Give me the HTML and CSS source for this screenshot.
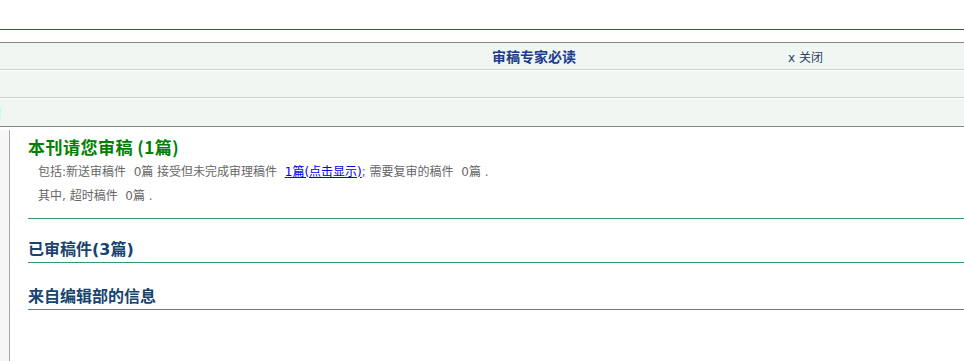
FILE: index.html
```html
<!DOCTYPE html>
<html lang="zh-CN">

<head>
    <meta charset="UTF-8">
    <title>审稿中心</title>
    <link rel="stylesheet" href="styles.css">
</head>

<body>
    <div class="top"></div>
    <div class="darkline"></div>

    <div class="bands">
        <div class="band notice">
            <span class="notice-title">审稿专家必读</span>
            <a class="close" href="#">x 关闭</a>
        </div>
        <div class="band"></div>
        <div class="band last"><span class="stub"></span></div>
    </div>

    <div class="main">
        <div class="side"></div>
        <div class="content">
            <div class="section first">
                <div class="head green">本刊请您审稿 (1篇)</div>
                <div class="info">包括:新送审稿件&nbsp;&nbsp;0篇 接受但未完成审理稿件&nbsp;&nbsp;<a href="#">1篇(点击显示)</a>; 需要复审的稿件&nbsp;&nbsp;0篇 .</div>
                <div class="info">其中, 超时稿件&nbsp;&nbsp;0篇 .</div>
            </div>
            <div class="section">
                <div class="head">已审稿件(3篇)</div>
            </div>
            <div class="section msg">
                <div class="head">来自编辑部的信息</div>
            </div>
        </div>
    </div>
</body>

</html>
```

FILE: styles.css
```css
body {
    margin: 0;
    font-family: "DejaVu Sans", "Noto Sans CJK SC", sans-serif;
    font-size: 12px;
    color: #666;
    background: #fff;
}

.top {
    height: 29px;
}

.darkline {
    height: 1px;
    background-color: #3d5d3a;
}

.bands {
    margin-top: 12px;
    border-top: 1px solid #858585;
}

.band {
    height: 26px;
    background-color: #f0f6f2;
    border-bottom: 1px solid #cfcfcf;
    margin-bottom: 1px;
    display: flex;
    align-items: center;
}

.band.last {
    height: 27px;
    margin-bottom: 0;
    border-bottom: 1px solid #858585;
}

.stub {
    width: 1px;
    height: 12px;
    background-color: #c4fbee;
}

.notice {
    padding-left: 492px;
    gap: 212px;
}

.notice-title {
    font-family: "Noto Sans CJK SC", sans-serif;
    font-size: 14px;
    font-weight: bold;
    color: #1b3c8e;
}

.close {
    color: #2c3e63;
    text-decoration: none;
}

.main {
    display: flex;
    margin-top: 3px;
    min-height: 240px;
}

.side {
    width: 9px;
    background-color: #f6f6f6;
    border-right: 1px solid #a8a8a8;
}

.content {
    flex: 1;
    padding-left: 18px;
    padding-top: 4px;
}

.section {
    border-bottom: 1px solid #339966;
}

.section.first {
    padding-bottom: 10px;
}

.head {
    font-size: 16px;
    font-weight: bold;
    line-height: 24px;
    margin-top: 19px;
    color: #17436f;
}

.section.msg .head {
    margin-top: 22px;
}

.section.first .head {
    margin-top: 0;
    line-height: 26px;
}

.head.green {
    font-family: "Noto Sans CJK SC", sans-serif;
    color: #008000;
    font-size: 17px;
    letter-spacing: 0.5px;
}

.info {
    line-height: 24px;
    padding-left: 10px;
}

.info a {
    color: #0000ee;
}
```
